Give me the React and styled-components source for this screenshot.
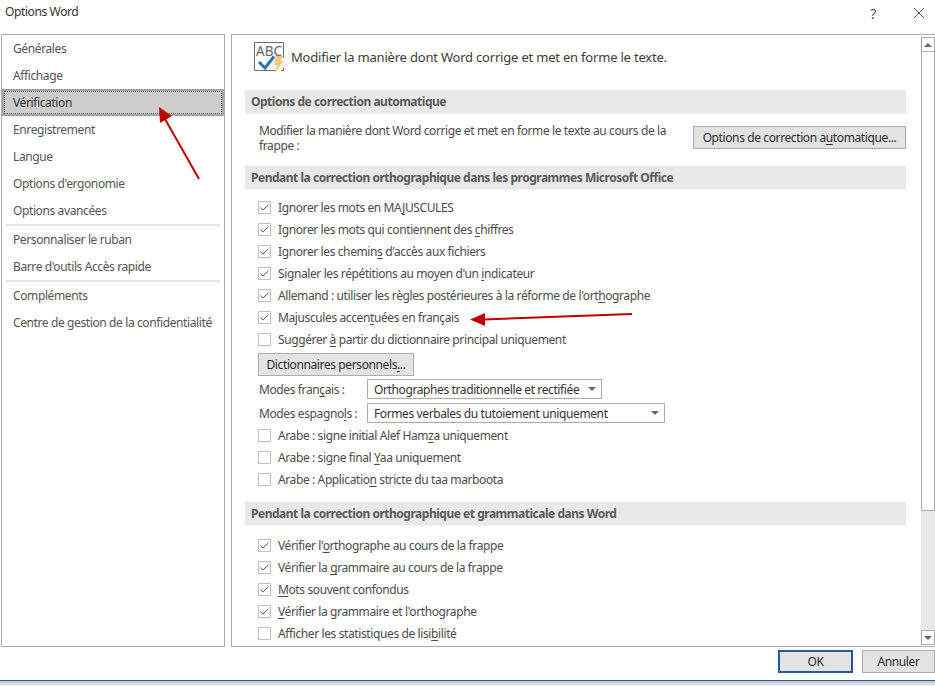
import React from 'react';
import styled, { createGlobalStyle } from 'styled-components';

const GlobalStyle = createGlobalStyle`
    html, body {
        margin: 0;
        padding: 0;
        background: #fff;
        overflow: hidden;
    }
    body {
        font-family: "Noto Sans", "Open Sans", sans-serif;
        font-size: 12px;
        letter-spacing: -0.39px;
        color: #4c4c4c;
    }
    u {
        text-underline-offset: 2px;
        text-decoration-skip-ink: none;
    }
`;

const Page = styled.div`
    position: relative;
    width: 935px;
    height: 686px;
    overflow: hidden;
    display: flex;
    flex-direction: column;
`;

const TitleBar = styled.div`
    height: 34px;
    flex: none;
    display: flex;
    align-items: flex-start;
    gap: 15px;
    padding: 3px 0 0 5px;
    box-sizing: border-box;
    color: #333;
`;

const TitleText = styled.div`
    flex: 1;
    line-height: 18px;
`;

const TitleButton = styled.div`
    width: ${({ $w }) => $w}px;
    height: 20px;
    display: flex;
    align-items: center;
    justify-content: center;
    color: #555;
    font-size: 14px;
`;

const Main = styled.div`
    height: 613px;
    flex: none;
    display: flex;
    gap: 6px;
    padding-left: 1px;
`;

const Sidebar = styled.div`
    width: 224px;
    flex: none;
    box-sizing: border-box;
    border: 1px solid #ababab;
    display: flex;
    flex-direction: column;
`;

const NavItem = styled.div`
    height: 27px;
    flex: none;
    box-sizing: border-box;
    display: flex;
    align-items: center;
    padding-left: 11px;
    color: ${({ $active }) => ($active ? '#333' : '#555')};
    ${({ $active }) => $active && `
        background: #cdcdcd;
        border: 2px solid #a6a6a6;
        outline: 1px dotted #666;
        outline-offset: -3px;
        padding-left: 9px;
    `}
`;

const NavDivider = styled.div`
    height: 2px;
    flex: none;
    margin: 0 4px;
    background: #e6e6e6;
`;

const Panel = styled.div`
    flex: 1;
    min-width: 0;
    display: flex;
    border: solid #ababab;
    border-width: 1px 0 1px 1px;
`;

const Content = styled.div`
    flex: 1;
    min-width: 0;
    overflow: hidden;
    padding: 7px 15px 0 13px;
`;

const Heading = styled.div`
    display: flex;
    align-items: center;
    gap: 7px;
    height: 30px;
    padding-left: 9px;
    font-size: 13px;
    letter-spacing: -0.2px;
    color: #3c3c3c;
`;

const SectionTitle = styled.div`
    height: 24px;
    margin-top: ${({ $top }) => $top || 0}px;
    padding-left: 6px;
    display: flex;
    align-items: center;
    background: #e9e9e9;
    border-bottom: 1px solid #f0f0f0;
    box-sizing: border-box;
    font-weight: 700;
    letter-spacing: -0.48px;
    color: #5a5a5a;
`;

const AutoCorrect = styled.div`
    display: flex;
    justify-content: space-between;
    align-items: flex-start;
    padding: 12px 0 0 14px;
    height: 28px;
    margin-bottom: 12px;
`;

const AutoCorrectText = styled.div`
    width: 420px;
    line-height: 15px;
    margin-top: -3px;
`;

const PushButton = styled.div`
    height: 23px;
    flex: none;
    box-sizing: border-box;
    width: ${({ $w }) => $w}px;
    margin: ${({ $m }) => $m || '0'};
    display: flex;
    align-items: center;
    justify-content: center;
    background: #e3e3e3;
    border: ${({ $primary }) => ($primary ? '2px solid #2b579a' : '1px solid #adadad')};
    color: #2c2c2c;
`;

const CheckList = styled.div`
    margin-top: ${({ $top }) => $top}px;
    padding-left: 13px;
`;

const Row = styled.div`
    height: 22px;
    display: flex;
    align-items: center;
    gap: 7px;
    white-space: nowrap;
`;

const Box = styled.span`
    width: 13px;
    height: 13px;
    flex: none;
    box-sizing: border-box;
    border: 1px solid #c0c0c0;
    background: #fff;
    display: flex;
    align-items: center;
    justify-content: center;
`;

const ModeRow = styled.div`
    display: flex;
    align-items: center;
    height: 20px;
    margin-top: ${({ $top }) => $top}px;
    padding-left: 14px;
`;

const ModeLabel = styled.div`
    width: 108px;
    flex: none;
`;

const Select = styled.div`
    width: ${({ $w }) => $w}px;
    height: 20px;
    box-sizing: border-box;
    border: 1px solid #ababab;
    display: flex;
    align-items: center;
    justify-content: space-between;
    padding: 0 5px 0 6px;
    color: #333;
`;

const Caret = styled.span`
    width: 0;
    height: 0;
    border-left: 4px solid transparent;
    border-right: 4px solid transparent;
    border-top: 4px solid #666;
`;

const Scrollbar = styled.div`
    width: 14px;
    flex: none;
    margin-top: 2px;
    margin-bottom: 1px;
    display: flex;
    flex-direction: column;
    background: #e9e9e9;
`;

const ScrollButton = styled.div`
    height: 15px;
    flex: none;
    box-sizing: border-box;
    border: 1px solid #ababab;
    background: #fff;
    display: flex;
    align-items: center;
    justify-content: center;
`;

const ScrollThumb = styled.div`
    height: 459px;
    flex: none;
    box-sizing: border-box;
    border: 1px solid #ababab;
    border-top: none;
    background: #fff;
`;

const ScrollTrack = styled.div`
    flex: 1;
`;

const CaretUp = styled(Caret)`
    border-top: none;
    border-bottom: 4px solid #666;
`;

const Footer = styled.div`
    height: 33px;
    flex: none;
    box-sizing: border-box;
    padding-top: 3px;
    display: flex;
    justify-content: flex-end;
    gap: 9px;
`;

const Shadow = styled.div`
    flex: 1;
    border-top: 1px solid #2b579a;
    background: linear-gradient(#c4c4c4, #f0f0f0);
`;

const Overlay = styled.svg`
    position: absolute;
    left: 0;
    top: 0;
    pointer-events: none;
`;

const Check = ({ on }) => (
    <Box>
        {on && (
            <svg width="9" height="7" viewBox="0 0 9 7">
                <path d="M0.5 3.5 L3 6 L8.5 0.8" fill="none" stroke="#5c5c5c" strokeWidth="1" />
            </svg>
        )}
    </Box>
);

const ProofIcon = () => (
    <svg width="30" height="31" viewBox="0 0 30 31">
        <path d="M22 28.5 H0.5 V0.5 H29.5 V16" fill="none" stroke="#6e6e6e" />
        <path d="M29.5 26 V28.5 H27" fill="none" stroke="#6e6e6e" />
        <text x="2" y="13.5" fontFamily="Noto Sans, sans-serif" fontSize="13.5" fill="#666" letterSpacing="0">ABC</text>
        <path d="M5 20 L11 26 L20 14.5" fill="none" stroke="#2e75b6" strokeWidth="3" />
        <path d="M22 14 H29.5 L26.5 19 H29.5 L21 30.5 L23 23 H20 Z" fill="#f2c77e" />
    </svg>
);

const navTop = ['Générales', 'Affichage', 'Vérification', 'Enregistrement', 'Langue', "Options d'ergonomie", 'Options avancées'];
const navMid = ['Personnaliser le ruban', "Barre d'outils Accès rapide"];
const navEnd = ['Compléments', 'Centre de gestion de la confidentialité'];

const officeChecks = [
    [<>Ignorer les mots en MA<u>J</u>USCULES</>, true],
    [<>Ignorer les mots qui contiennent des <u>c</u>hiffres</>, true],
    [<>Ignorer les chemin<u>s</u> d'accès aux fichiers</>, true],
    [<>Signaler les répétitions au moyen d'un <u>i</u>ndicateur</>, true],
    [<>Allemand : utiliser les règles postérieures à la réforme de l'ort<u>h</u>ographe</>, true],
    [<>Majuscules accen<u>t</u>uées en français</>, true],
    [<>Suggérer <u>à</u> partir du dictionnaire principal uniquement</>, false],
];

const arabicChecks = [
    [<>Arabe : signe initial Alef Ham<u>z</u>a uniquement</>, false],
    [<>Arabe : signe final <u>Y</u>aa uniquement</>, false],
    [<>Arabe : Applicatio<u>n</u> stricte du taa marboota</>, false],
];

const wordChecks = [
    [<>Vérifier l'<u>o</u>rthographe au cours de la frappe</>, true],
    [<>Vérifier la <u>g</u>rammaire au cours de la frappe</>, true],
    [<><u>M</u>ots souvent confondus</>, true],
    [<><u>V</u>érifier la grammaire et l'orthographe</>, true],
    [<>Afficher les statistiques de lisi<u>b</u>ilité</>, false],
];

const renderChecks = (items) =>
    items.map(([label, on], i) => (
        <Row key={i}>
            <Check on={on} />
            <span>{label}</span>
        </Row>
    ));

export default function App() {
    return (
        <Page>
            <GlobalStyle />
            <TitleBar>
                <TitleText>Options Word</TitleText>
                <TitleButton $w={30}>?</TitleButton>
                <TitleButton $w={32}>
                    <svg width="12" height="12" viewBox="0 0 12 12">
                        <path d="M1 1 L11 11 M11 1 L1 11" stroke="#555" strokeWidth="1" />
                    </svg>
                </TitleButton>
            </TitleBar>

            <Main>
                <Sidebar>
                    {navTop.map((n) => (
                        <NavItem key={n} $active={n === 'Vérification'}>{n}</NavItem>
                    ))}
                    <NavDivider />
                    {navMid.map((n) => <NavItem key={n}>{n}</NavItem>)}
                    <NavDivider />
                    {navEnd.map((n) => <NavItem key={n}>{n}</NavItem>)}
                </Sidebar>

                <Panel>
                    <Content>
                        <Heading>
                            <ProofIcon />
                            Modifier la manière dont Word corrige et met en forme le texte.
                        </Heading>

                        <SectionTitle $top={18}>Options de correction automatique</SectionTitle>
                        <AutoCorrect>
                            <AutoCorrectText>
                                Modifier la manière dont Word corrige et met en forme le texte au cours de la frappe :
                            </AutoCorrectText>
                            <PushButton $w={213}>Options de correction a<u>u</u>tomatique...</PushButton>
                        </AutoCorrect>

                        <SectionTitle>Pendant la correction orthographique dans les programmes Microsoft Office</SectionTitle>
                        <CheckList $top={6}>{renderChecks(officeChecks)}</CheckList>
                        <PushButton $w={156} $m="3px 0 0 13px">Dictionnaires personnels<u>.</u>..</PushButton>

                        <ModeRow $top={3}>
                            <ModeLabel>Modes fran<u>ç</u>ais :</ModeLabel>
                            <Select $w={235}>Orthographes traditionnelle et rectifiée<Caret /></Select>
                        </ModeRow>
                        <ModeRow $top={4}>
                            <ModeLabel>Modes espagno<u>l</u>s :</ModeLabel>
                            <Select $w={298}>Formes verbales du tutoiement uniquement<Caret /></Select>
                        </ModeRow>

                        <CheckList $top={1}>{renderChecks(arabicChecks)}</CheckList>

                        <SectionTitle $top={12}>Pendant la correction orthographique et grammaticale dans Word</SectionTitle>
                        <CheckList $top={8}>{renderChecks(wordChecks)}</CheckList>
                    </Content>

                    <Scrollbar>
                        <ScrollButton><CaretUp /></ScrollButton>
                        <ScrollThumb />
                        <ScrollTrack />
                        <ScrollButton><Caret /></ScrollButton>
                    </Scrollbar>
                </Panel>
            </Main>

            <Footer>
                <PushButton $w={75} $primary>OK</PushButton>
                <PushButton $w={73}>Annuler</PushButton>
            </Footer>
            <Shadow />

            <Overlay width="935" height="686" viewBox="0 0 935 686">
                <path d="M199 179 L165 119" stroke="#c00000" strokeWidth="2" fill="none" />
                <path d="M159 107 L172 116 L160 123 Z" fill="#c00000" />
                <path d="M632 314 L484 319.5" stroke="#c00000" strokeWidth="2" fill="none" />
                <path d="M470 319.5 L485 313 L485 326 Z" fill="#c00000" />
            </Overlay>
        </Page>
    );
}
